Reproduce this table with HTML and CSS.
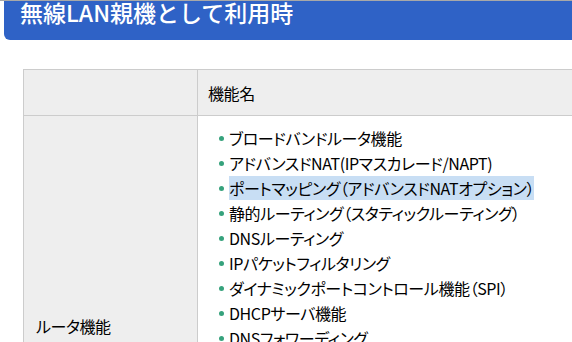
FILE: index.html
```html
<!DOCTYPE html>
<html lang="ja">
<head>
    <meta charset="UTF-8">
    <title>無線LAN親機として利用時</title>
    <link rel="stylesheet" href="styles.css">
</head>
<body>
    <h2 class="section-title">無線LAN親機として利用時</h2>

    <table class="spec-table">
        <thead>
            <tr>
                <th class="col-name"></th>
                <th>機能名</th>
            </tr>
        </thead>
        <tbody>
            <tr>
                <th class="col-name">ルータ機能</th>
                <td>
                    <ul class="feature-list">
                        <li>ブロードバンドルータ機能</li>
                        <li>アドバンスドNAT(IPマスカレード/NAPT)</li>
                        <li><span class="selected">ポートマッピング（アドバンスドNATオプション）</span></li>
                        <li>静的ルーティング（スタティックルーティング）</li>
                        <li>DNSルーティング</li>
                        <li>IPパケットフィルタリング</li>
                        <li>ダイナミックポートコントロール機能（SPI）</li>
                        <li>DHCPサーバ機能</li>
                        <li>DNSフォワーディング</li>
                        <li>UPnP機能</li>
                        <li>VPNパススルー（PPTP/IPsec）</li>
                        <li>IPv6パススルー</li>
                        <li>PPPoEマルチセッション</li>
                        <li>アンナンバードIP接続</li>
                        <li>DMZ機能</li>
                        <li>NTPクライアント機能</li>
                    </ul>
                </td>
            </tr>
        </tbody>
    </table>
</body>
</html>
```

FILE: styles.css
```css
html, body {
    margin: 0;
    padding: 0;
    overflow: hidden;
}

body {
    font-family: "Noto Sans CJK JP", "Noto Sans", sans-serif;
    color: #000;
    background: #fff;
    border-top: 1px solid #a8a8a8;
}

.section-title {
    margin: 0 0 29px 4px;
    height: 39px;
    padding: 0 0 0 16px;
    background: #2f62c6;
    border-bottom-left-radius: 6px;
    color: #fff;
    font-size: 23px;
    font-weight: 500;
    line-height: 22px;
    white-space: nowrap;
}

.spec-table {
    margin-left: 23px;
    width: 640px;
    border-collapse: collapse;
    font-size: 16px;
    letter-spacing: -0.4px;
    font-feature-settings: "palt";
}

.spec-table th,
.spec-table td {
    border: 1px solid #ccc;
    text-align: left;
    font-weight: normal;
    vertical-align: middle;
}

.spec-table thead th {
    height: 45px;
    padding: 0 10px;
    background: #eee;
}

.spec-table .col-name {
    width: 151px;
    padding: 0 10px 0 12px;
    background: #eee;
}

.spec-table td {
    padding: 10px 10px;
}

.feature-list {
    margin: 0;
    padding: 0 0 0 21px;
    list-style: none;
}

.feature-list li {
    position: relative;
    line-height: 25px;
    white-space: nowrap;
}

.feature-list li::before {
    content: "";
    position: absolute;
    left: -10px;
    top: 10px;
    width: 5px;
    height: 5px;
    border-radius: 50%;
    background: #36a27c;
}

.selected {
    background: #c8def4;
}
```
